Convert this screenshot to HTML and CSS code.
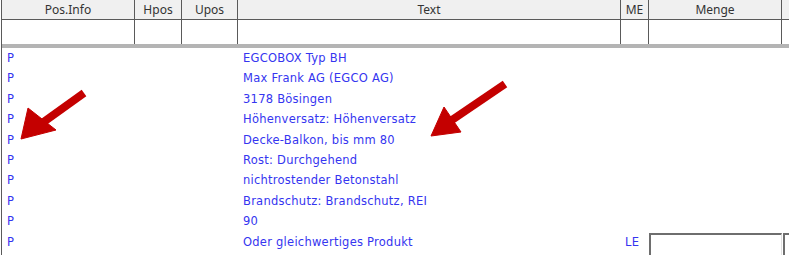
FILE: index.html
```html
<!DOCTYPE html>
<html lang="de">
  <head>
    <meta charset="UTF-8" />
    <meta name="viewport" content="width=device-width, initial-scale=1.0" />
    <link rel="stylesheet" href="styles.css">
    <title>Positionen</title>
  </head>

  <body>
    <main class="sheet">
      <div class="grid grid--head">
        <div class="cell head">Pos.Info</div>
        <div class="cell head">Hpos</div>
        <div class="cell head">Upos</div>
        <div class="cell head">Text</div>
        <div class="cell head">ME</div>
        <div class="cell head">Menge</div>
        <div class="cell head cell--last"></div>
      </div>
      <div class="grid grid--filter">
        <div class="cell filter"></div>
        <div class="cell filter"></div>
        <div class="cell filter"></div>
        <div class="cell filter"></div>
        <div class="cell filter"></div>
        <div class="cell filter"></div>
        <div class="cell filter cell--last"></div>
      </div>
      <div class="divider"></div>

      <ul class="rows">
        <li class="grid row"><span class="pos">P</span><span></span><span></span><span class="txt">EGCOBOX Typ BH</span></li>
        <li class="grid row"><span class="pos">P</span><span></span><span></span><span class="txt">Max Frank AG (EGCO AG)</span></li>
        <li class="grid row"><span class="pos">P</span><span></span><span></span><span class="txt">3178 Bösingen</span></li>
        <li class="grid row"><span class="pos">P</span><span></span><span></span><span class="txt">Höhenversatz: Höhenversatz</span></li>
        <li class="grid row"><span class="pos">P</span><span></span><span></span><span class="txt">Decke-Balkon, bis mm 80</span></li>
        <li class="grid row"><span class="pos">P</span><span></span><span></span><span class="txt">Rost: Durchgehend</span></li>
        <li class="grid row"><span class="pos">P</span><span></span><span></span><span class="txt">nichtrostender Betonstahl</span></li>
        <li class="grid row"><span class="pos">P</span><span></span><span></span><span class="txt">Brandschutz: Brandschutz, REI</span></li>
        <li class="grid row"><span class="pos">P</span><span></span><span></span><span class="txt">90</span></li>
        <li class="grid row">
          <span class="pos">P</span><span></span><span></span>
          <span class="txt">Oder gleichwertiges Produkt</span>
          <span class="unit">LE</span>
          <span class="field"></span>
          <span class="field field--next"></span>
        </li>
      </ul>

      <svg class="arrows" width="789" height="255" viewBox="0 0 789 255">
        <g fill="#c40000" stroke="#c40000">
          <line x1="84" y1="93" x2="38" y2="126" stroke-width="8" stroke-linecap="butt" />
          <polygon points="21,139 28,108 56,130" stroke-width="1" />
          <line x1="505" y1="84" x2="449" y2="122" stroke-width="8" stroke-linecap="butt" />
          <polygon points="431,136 444,107 461,132" stroke-width="1" />
        </g>
      </svg>
    </main>
  </body>
</html>
```

FILE: styles.css
```css
* {
  box-sizing: border-box;
}
body {
  margin: 0;
  background: #ffffff;
  overflow: hidden;
}
.sheet {
  position: relative;
  width: 789px;
  height: 255px;
  margin-left: 1px;
  border-left: 1px solid #5a5a5a;
}
.grid {
  display: grid;
  grid-template-columns: 133px 47px 56px 383px 28px 133px 1fr;
}

/* header */
.grid--head {
  height: 20px;
  background: #f0f0f0;
  border-bottom: 1px solid #5a5a5a;
}
.cell {
  border-right: 1px solid #5a5a5a;
}
.cell--last {
  border-right: none;
}
.head {
  font-family: "Noto Sans", sans-serif;
  font-size: 12px;
  line-height: 19px;
  color: #333333;
  text-align: center;
}
.grid--filter {
  height: 24px;
}
.divider {
  height: 4px;
  background: #b4b4b4;
}

/* data rows */
.rows {
  list-style: none;
  margin: 0;
  padding: 0;
}
.row {
  height: 20.4px;
  font-family: "DejaVu Sans", sans-serif;
  font-size: 11.5px;
  letter-spacing: 0.25px;
  line-height: 20px;
  color: #3535f0;
}
.pos {
  padding-left: 5px;
}
.txt {
  padding-left: 5px;
  white-space: nowrap;
}
.unit {
  padding-left: 4px;
}
.field {
  margin-top: 1px;
  height: 26px;
  border-top: 2px solid #6e6e6e;
  border-left: 2px solid #6e6e6e;
  border-right: 1px solid #e0e0e0;
  background: #ffffff;
}
.field--next {
  margin-left: 1px;
}

.arrows {
  position: absolute;
  left: -2px;
  top: 0;
  pointer-events: none;
}
```
